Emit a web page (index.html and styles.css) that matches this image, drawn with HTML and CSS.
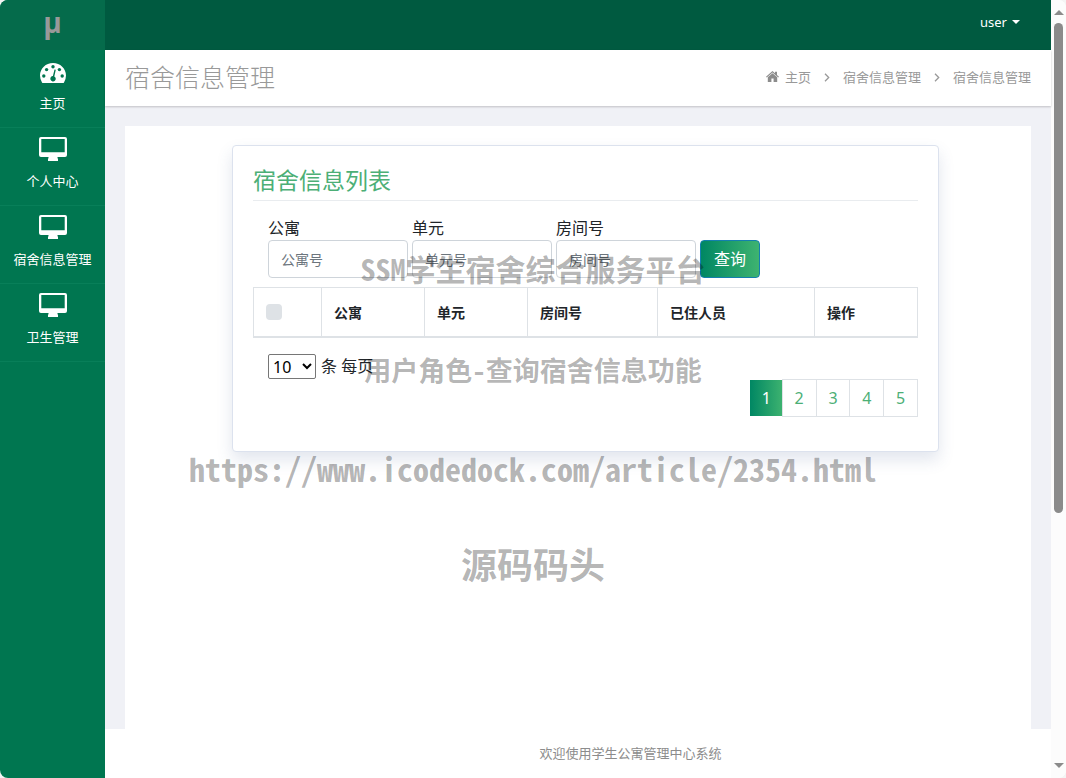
FILE: index.html
```html
<!DOCTYPE html>
<html lang="zh-CN">
<head>
<meta charset="utf-8">
<meta name="viewport" content="width=device-width, initial-scale=1">
<title>宿舍信息管理</title>
<link rel="stylesheet" href="styles.css">
</head>
<body>
<svg class="defs" aria-hidden="true">
  <symbol id="desktop" viewBox="0 0 28 24">
    <path fill-rule="evenodd" d="M2 0h24a2 2 0 0 1 2 2v16a2 2 0 0 1-2 2h-7.500v1.500h.5v2.500h-10v-2.500h.5V20H2a2 2 0 0 1-2-2V2a2 2 0 0 1 2-2zM2.300 2v13.300h23.400V2z"/>
  </symbol>
</svg>
<div class="window">
  <nav class="sidebar">
    <a class="brand" href="#">µ</a>
    <a class="nav-item" href="#">
      <svg class="nav-icon" viewBox="0 0 28 24" aria-hidden="true">
        <path fill="#fff" d="M3 23.500A13 13 0 0 1 1 16.600C1 9.500 6.800 4 14 4s13 5.500 13 12.600a13 13 0 0 1-2 6.900q-.3.500-1 .5H4q-.700 0-1-.5z"/>
        <g fill="#007650"><circle cx="4.800" cy="17" r="1.700"/><circle cx="7.600" cy="10.600" r="1.700"/><circle cx="14" cy="7.800" r="1.700"/><circle cx="20.400" cy="10.600" r="1.700"/><circle cx="23.200" cy="17" r="1.700"/><path d="M15.500 10.500l1.300.3-1.500 6.600a2.700 2.700 0 1 1-1.400-.3z"/></g>
      </svg>
      <span>主页</span>
    </a>
    <a class="nav-item" href="#"><svg class="nav-icon" aria-hidden="true"><use href="#desktop"/></svg><span>个人中心</span></a>
    <a class="nav-item" href="#"><svg class="nav-icon" aria-hidden="true"><use href="#desktop"/></svg><span>宿舍信息管理</span></a>
    <a class="nav-item" href="#"><svg class="nav-icon" aria-hidden="true"><use href="#desktop"/></svg><span>卫生管理</span></a>
  </nav>
  <div class="main">
    <header class="topbar"><button class="user" type="button">user <span class="caret"></span></button></header>
    <div class="page-head">
      <h1>宿舍信息管理</h1>
      <nav class="crumbs">
        <a href="#"><svg class="home" viewBox="0 0 13 11" aria-hidden="true"><path d="M6.500 0 9 2.200V.8h2v3.100l2 1.800-.8.900L6.500 1.600.8 6.600 0 5.700zM6.500 2.300l4.700 4V11H7.600V7.600H5.400V11H1.800V6.300z"/></svg>主页</a>
        <svg class="sep" viewBox="0 0 6 9" aria-hidden="true"><path d="M1 .8 4.700 4.500 1 8.200"/></svg>
        <a href="#">宿舍信息管理</a>
        <svg class="sep" viewBox="0 0 6 9" aria-hidden="true"><path d="M1 .8 4.700 4.500 1 8.200"/></svg>
        <a href="#">宿舍信息管理</a>
      </nav>
    </div>
    <main class="content">
      <div class="panel">
        <section class="card">
          <h2>宿舍信息列表</h2>
          <form class="search">
            <label>公寓<input type="text" placeholder="公寓号"></label>
            <label>单元<input type="text" placeholder="单元号"></label>
            <label>房间号<input type="text" placeholder="房间号"></label>
            <button type="button">查询</button>
          </form>
          <table>
            <colgroup><col class="c-check"><col class="c-std"><col class="c-std"><col class="c-room"><col class="c-people"><col class="c-std"></colgroup>
            <thead>
              <tr><th><input type="checkbox" aria-label="全选"></th><th>公寓</th><th>单元</th><th>房间号</th><th>已住人员</th><th>操作</th></tr>
            </thead>
          </table>
          <label class="per-page"><select><option>10</option><option>15</option><option>20</option></select>条 每页</label>
          <nav class="pages" aria-label="分页">
            <a class="active" href="#">1</a><a href="#">2</a><a href="#">3</a><a href="#">4</a><a href="#">5</a>
          </nav>
        </section>
      </div>
    </main>
    <footer>欢迎使用学生公寓管理中心系统</footer>
  </div>
  <div class="scrollbar" aria-hidden="true"><span class="arrow up"></span><span class="track"><span class="thumb"></span></span><span class="arrow down"></span></div>
  <div class="watermark">
    <p class="wm-title">SSM学生宿舍综合服务平台</p>
    <p class="wm-role">用户角色-查询宿舍信息功能</p>
    <p class="wm-url">https://www.icodedock.com/article/2354.html</p>
    <p class="wm-site">源码码头</p>
  </div>
</div>
</body>
</html>
```
FILE: styles.css
```css
* { box-sizing: border-box; }

body {
  margin: 0;
  background: #f4f4f4;
  color: #212529;
  font: 16px/24px "Noto Sans", "Noto Sans CJK SC", sans-serif;
}

h1, h2, p { margin: 0; }
a { color: inherit; text-decoration: none; }
button, input, select { font: inherit; }
.defs { display: none; }

.window {
  position: relative;
  display: grid;
  grid-template-columns: 105px minmax(0, 1fr) 15px;
  min-height: 100vh;
  overflow: hidden;
  border-radius: 8px;
  background: #fff;
}

/* Sidebar */
.sidebar { background: #007650; color: #fff; }

.brand {
  display: block;
  height: 50px;
  background: #056b4b;
  color: #999;
  font: bold 28px/44px "Open Sans", "Noto Sans", sans-serif;
  text-align: center;
}

.nav-item {
  display: flex;
  flex-direction: column;
  align-items: center;
  gap: 10px;
  height: 78px;
  padding-top: 9px;
  border-bottom: 1px solid #087f59;
  font-size: 13px;
  line-height: 20px;
}

.nav-icon { width: 28px; height: 24px; fill: #fff; }

/* Main column */
.main { display: flex; flex-direction: column; }

.topbar {
  display: flex;
  justify-content: flex-end;
  height: 50px;
  padding-right: 31px;
  background: #005a40;
}

.user {
  display: flex;
  align-items: center;
  gap: 5px;
  padding: 0 0 6px;
  border: 0;
  background: none;
  color: #fff;
  font-size: 13px;
}

.caret {
  border: 4px solid transparent;
  border-top-color: #fff;
  border-bottom: 0;
}

.page-head {
  z-index: 1;
  display: flex;
  align-items: center;
  justify-content: space-between;
  height: 56px;
  padding: 0 20px 2px;
  background: #fff;
  box-shadow: 0 1px 2px rgba(0, 0, 0, .2);
  color: #999;
}

.page-head h1 { font-size: 25px; font-weight: 300; line-height: 36px; }

.crumbs {
  display: flex;
  align-items: center;
  gap: 13px;
  font-size: 13px;
  line-height: 20px;
}

.home { width: 13px; height: 11px; margin-right: 6px; fill: #8c8c8c; }
.sep { width: 6px; height: 9px; fill: none; stroke: #999; stroke-width: 1.3; }

.content {
  display: flex;
  flex: 1;
  padding: 20px 20px 0;
  background: #f0f1f6;
}

.panel { flex: 1; padding: 19px 92px 0 107px; background: #fff; }

footer {
  height: 49px;
  padding-left: 105px;
  color: #8c8c8c;
  font-size: 13px;
  line-height: 48px;
  text-align: center;
}

/* Card */
.card {
  padding: 20px 20px 34px;
  border: 1px solid #dce2ee;
  border-radius: 4px;
  background: #fff;
  box-shadow: 0 8px 16px rgba(60, 85, 140, .15);
}

.card h2 {
  padding-bottom: 5px;
  border-bottom: 1px solid #e9ecef;
  color: #4caf76;
  font-size: 23px;
  font-weight: 400;
  line-height: 29px;
}

.search {
  display: flex;
  align-items: flex-end;
  gap: 4px;
  margin: 15px 15px 9px;
}

.search label { display: grid; flex: 0 1 140px; line-height: 24px; }

.search input {
  width: 100%;
  height: 38px;
  padding: 6px 12px;
  border: 1px solid #ced4da;
  border-radius: 4px;
  font-size: 14px;
}

.search input::placeholder { color: #6c757d; opacity: 1; }

.search button {
  width: 60px;
  height: 38px;
  padding: 0;
  border: 1px solid #147fae;
  border-radius: 4px;
  background: linear-gradient(to right, #008763, #3eb370);
  color: #fff;
}

table {
  width: 100%;
  border-collapse: collapse;
  table-layout: fixed;
  font-size: 14px;
}

.c-check { width: 68px; }
.c-std { width: 103px; }
.c-room { width: 130px; }
.c-people { width: 157px; }

th {
  height: 49px;
  padding: 3px 12px 0;
  border: 1px solid #dee2e6;
  border-bottom-width: 2px;
  text-align: left;
}

th input {
  display: block;
  appearance: none;
  width: 16px;
  height: 16px;
  margin: -3px 0 0;
  border-radius: 4px;
  background: #dee2e6;
}

.per-page {
  display: flex;
  align-items: center;
  gap: 5px;
  margin: 16px 15px 0;
}

.per-page select {
  width: 48px;
  height: 25px;
  padding: 0;
  border: 1px solid #767676;
  border-radius: 2px;
  background: #fff;
  color: #000;
}

.pages { display: flex; width: 168px; margin-left: auto; }

.pages a {
  flex: 1;
  height: 38px;
  margin-left: -1px;
  border: 1px solid #dee2e6;
  color: #4caf76;
  line-height: 36px;
  text-align: center;
}

.pages .active {
  margin-left: 0;
  border: 0;
  background: linear-gradient(to right, #008763, #3eb370) content-box;
  padding: 1px 0;
  color: #fff;
}

/* Scrollbar */
.scrollbar {
  display: flex;
  flex-direction: column;
  align-items: center;
  padding: 10px 0;
  background: #fcfcfc;
}

.arrow { border: 5px solid transparent; }
.up { border-top: 0; border-bottom-color: #8b8b8b; }
.down { border-bottom: 0; border-top-color: #8b8b8b; }
.track { flex: 1; width: 9px; padding: 8px 0; }
.thumb { display: block; height: 67%; border-radius: 5px; background: #8b8b8b; }

/* Watermark laid over the page */
.watermark {
  position: absolute;
  top: 248px;
  left: 0;
  right: 0;
  color: rgba(0, 0, 0, .3);
  font-family: "Noto Sans Mono CJK SC", "Noto Sans CJK SC", sans-serif;
  font-weight: 700;
  text-align: center;
  pointer-events: none;
}

.wm-title { font-size: 30px; line-height: 40px; }
.wm-role { margin-top: 62px; font-size: 27px; line-height: 40px; }
.wm-url { margin-top: 58px; font-size: 32px; line-height: 40px; }
.wm-site { margin-top: 50px; font-size: 36px; line-height: 50px; }
```
